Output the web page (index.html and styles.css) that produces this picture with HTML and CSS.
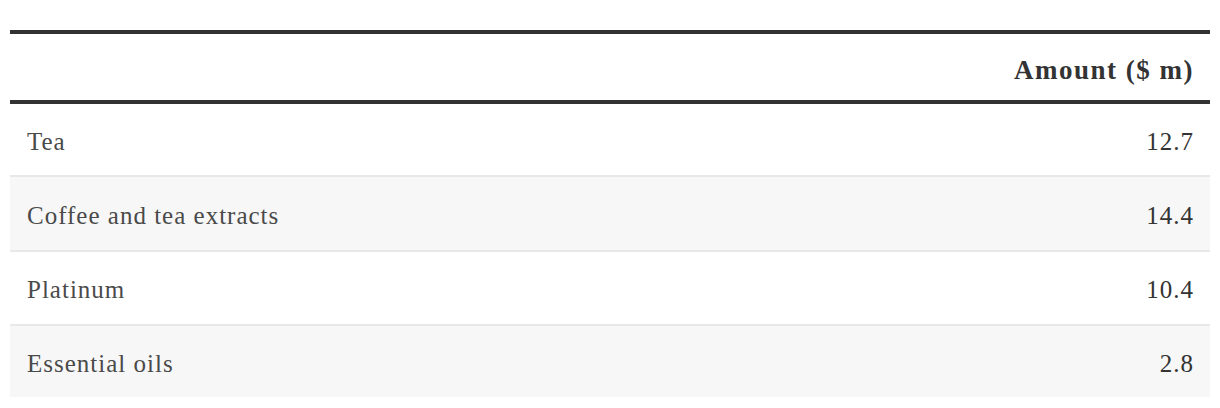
FILE: index.html
```html
<!DOCTYPE html>
<html>
<head>
<meta charset="utf-8">
<link rel="stylesheet" href="styles.css">
</head>
<body>
<table class="data">
  <thead>
    <tr><th class="label"></th><th class="num">Amount ($ m)</th></tr>
  </thead>
  <tbody>
    <tr><td class="label">Tea</td><td class="num">12.7</td></tr>
    <tr><td class="label">Coffee and tea extracts</td><td class="num">14.4</td></tr>
    <tr><td class="label">Platinum</td><td class="num">10.4</td></tr>
    <tr><td class="label">Essential oils</td><td class="num">2.8</td></tr>
  </tbody>
</table>
</body>
</html>
```

FILE: styles.css
```css
html, body { margin: 0; padding: 0; background: #fff; }
body { padding: 30px 10px 0 10px; font-family: "Liberation Serif", serif; }
.data { width: 1200px; border-collapse: collapse; }
.data thead tr { border-top: 4px solid #333; border-bottom: 4px solid #333; }
.data th { height: 60px; padding: 6px 16px 0 17px; font-size: 27px; letter-spacing: 1.5px; font-weight: bold; color: #333; }
.data td { height: 67px; padding: 4px 16px 0 17px; font-size: 25px; letter-spacing: 1px; color: #4a4a4a; }
.data tbody tr + tr { border-top: 2px solid #e8e8e8; }
.data tbody tr:nth-child(even) { background: #f7f7f7; }
.data tbody tr:nth-child(2) td { height: 69px; }
.data tbody tr:nth-child(3) td { height: 68px; }
.label { text-align: left; }
.num { text-align: right; }
.data td.num { color: #333; }
```
